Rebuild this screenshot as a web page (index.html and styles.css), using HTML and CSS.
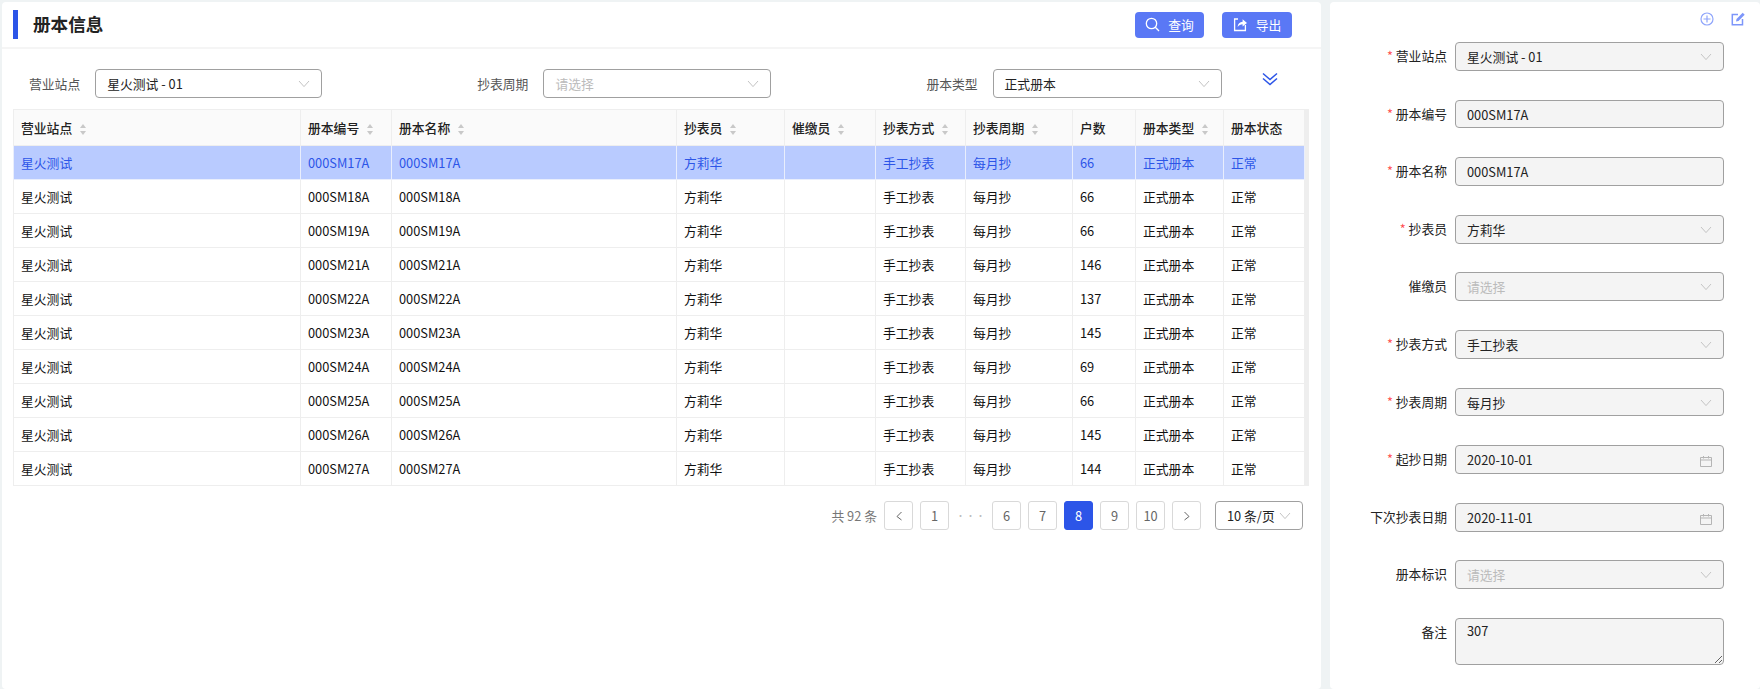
FILE: index.html
```html
<!DOCTYPE html>
<html lang="zh-CN">
<head>
    <meta charset="UTF-8">
    <meta name="viewport" content="width=device-width, initial-scale=1.0">
    <title>册本信息</title>
    <link rel="stylesheet" href="styles.css">
</head>
<body>
    <svg class="icon-defs" width="0" height="0">
        <symbol id="arrow" viewBox="0 0 12 8"><path d="M1 1l5 5.6L11 1" fill="none" stroke="currentColor" stroke-width="1"/></symbol>
        <symbol id="calendar" viewBox="0 0 12 12"><path d="M.5 2.5h11v9H.5zM.5 5h11M3.5 1v2.5M8.5 1v2.5" fill="none" stroke="currentColor" stroke-width="1"/></symbol>
    </svg>
    <div class="page">
        <div class="main-panel">
            <div class="panel-head">
                <h2 class="panel-title">册本信息</h2>
                <div class="head-actions">
                    <button class="head-btn">
                        <svg width="15" height="15" viewBox="0 0 15 15"><circle cx="6.5" cy="6.5" r="5.2" fill="none" stroke="#fff" stroke-width="1.3"/><path d="M10.3 10.3l3.7 3.7" stroke="#fff" stroke-width="1.3"/></svg>
                        查询
                    </button>
                    <button class="head-btn">
                        <svg width="15" height="15" viewBox="0 0 15 15"><path d="M5 2H1.6v11.5h10.8V8" fill="none" stroke="#fff" stroke-width="1.3"/><path d="M4.6 10c.2-3.4 2.200-5 5-5.200V2.200L14 6l-4.400 3.600V7.200c-2 0-3.600.8-5 2.800z" fill="#fff"/></svg>
                        导出
                    </button>
                </div>
            </div>
            <div class="filter-row">
                <div class="filter-item">
                    <label class="filter-label">营业站点</label>
                    <div class="control filter-1">星火测试 - 01<svg class="suffix"><use href="#arrow"/></svg></div>
                </div>
                <div class="filter-item">
                    <label class="filter-label">抄表周期</label>
                    <div class="control filter-2 placeholder">请选择<svg class="suffix"><use href="#arrow"/></svg></div>
                </div>
                <div class="filter-item">
                    <label class="filter-label">册本类型</label>
                    <div class="control filter-3">正式册本<svg class="suffix"><use href="#arrow"/></svg></div>
                </div>
                <svg class="expand" width="16" height="14" viewBox="0 0 16 14"><path d="M1 1.500l7 6 7-6M1 6.500l7 6 7-6" fill="none" stroke="#2c55e8" stroke-width="1.500"/></svg>
            </div>
            <div class="table-wrap">
                <table class="book-table">
                    <colgroup>
                        <col class="col-site"><col class="col-no"><col class="col-name"><col class="col-reader"><col class="col-payer"><col class="col-way"><col class="col-cycle"><col class="col-count"><col class="col-type"><col class="col-state">
                    </colgroup>
                    <thead>
                        <tr>
                            <th>营业站点<span class="sort"></span></th>
                            <th>册本编号<span class="sort"></span></th>
                            <th>册本名称<span class="sort"></span></th>
                            <th>抄表员<span class="sort"></span></th>
                            <th>催缴员<span class="sort"></span></th>
                            <th>抄表方式<span class="sort"></span></th>
                            <th>抄表周期<span class="sort"></span></th>
                            <th>户数</th>
                            <th>册本类型<span class="sort"></span></th>
                            <th>册本状态</th>
                        </tr>
                    </thead>
                    <tbody>
                        <tr class="selected"><td>星火测试</td><td>000SM17A</td><td>000SM17A</td><td>方莉华</td><td></td><td>手工抄表</td><td>每月抄</td><td>66</td><td>正式册本</td><td>正常</td></tr>
                        <tr><td>星火测试</td><td>000SM18A</td><td>000SM18A</td><td>方莉华</td><td></td><td>手工抄表</td><td>每月抄</td><td>66</td><td>正式册本</td><td>正常</td></tr>
                        <tr><td>星火测试</td><td>000SM19A</td><td>000SM19A</td><td>方莉华</td><td></td><td>手工抄表</td><td>每月抄</td><td>66</td><td>正式册本</td><td>正常</td></tr>
                        <tr><td>星火测试</td><td>000SM21A</td><td>000SM21A</td><td>方莉华</td><td></td><td>手工抄表</td><td>每月抄</td><td>146</td><td>正式册本</td><td>正常</td></tr>
                        <tr><td>星火测试</td><td>000SM22A</td><td>000SM22A</td><td>方莉华</td><td></td><td>手工抄表</td><td>每月抄</td><td>137</td><td>正式册本</td><td>正常</td></tr>
                        <tr><td>星火测试</td><td>000SM23A</td><td>000SM23A</td><td>方莉华</td><td></td><td>手工抄表</td><td>每月抄</td><td>145</td><td>正式册本</td><td>正常</td></tr>
                        <tr><td>星火测试</td><td>000SM24A</td><td>000SM24A</td><td>方莉华</td><td></td><td>手工抄表</td><td>每月抄</td><td>69</td><td>正式册本</td><td>正常</td></tr>
                        <tr><td>星火测试</td><td>000SM25A</td><td>000SM25A</td><td>方莉华</td><td></td><td>手工抄表</td><td>每月抄</td><td>66</td><td>正式册本</td><td>正常</td></tr>
                        <tr><td>星火测试</td><td>000SM26A</td><td>000SM26A</td><td>方莉华</td><td></td><td>手工抄表</td><td>每月抄</td><td>145</td><td>正式册本</td><td>正常</td></tr>
                        <tr><td>星火测试</td><td>000SM27A</td><td>000SM27A</td><td>方莉华</td><td></td><td>手工抄表</td><td>每月抄</td><td>144</td><td>正式册本</td><td>正常</td></tr>
                    </tbody>
                </table>
            </div>
            <div class="pager">
                <span class="pager-total">共 92 条</span>
                <a class="page-item">
                    <svg width="8" height="10" viewBox="0 0 8 10"><path d="M6.500 1L2 5.500 6.500 9" fill="none" stroke="#666" stroke-width="1"/></svg>
                </a>
                <a class="page-item">1</a>
                <span class="page-dots">•••</span>
                <a class="page-item">6</a>
                <a class="page-item">7</a>
                <a class="page-item active">8</a>
                <a class="page-item">9</a>
                <a class="page-item">10</a>
                <a class="page-item">
                    <svg width="8" height="10" viewBox="0 0 8 10"><path d="M1.500 1L6 5.500 1.500 9" fill="none" stroke="#666" stroke-width="1"/></svg>
                </a>
                <div class="control page-size">10 条/页<svg class="suffix"><use href="#arrow"/></svg></div>
            </div>
        </div>

        <div class="side-panel">
            <div class="side-tools">
                <svg width="14" height="14" viewBox="0 0 14 14"><circle cx="7" cy="7" r="6" fill="none" stroke="#8fa5fb" stroke-width="1.200"/><path d="M7 3.500v7M3.500 7h7" stroke="#8fa5fb" stroke-width="1.200"/></svg>
                <svg width="14" height="14" viewBox="0 0 14 14"><path d="M7 2.500H1.300v10.200h10.200V7" fill="none" stroke="#7d96fa" stroke-width="1.500"/><path d="M5 9.500l.5-2.500L11.700.8l2 2L7.500 9z" fill="#7d96fa"/></svg>
            </div>
            <div class="side-form">
                <div class="form-row"><label class="form-label required">营业站点</label><div class="control disabled">星火测试 - 01<svg class="suffix"><use href="#arrow"/></svg></div></div>
                <div class="form-row"><label class="form-label required">册本编号</label><div class="control disabled">000SM17A</div></div>
                <div class="form-row"><label class="form-label required">册本名称</label><div class="control disabled">000SM17A</div></div>
                <div class="form-row"><label class="form-label required">抄表员</label><div class="control disabled">方莉华<svg class="suffix"><use href="#arrow"/></svg></div></div>
                <div class="form-row"><label class="form-label">催缴员</label><div class="control disabled placeholder">请选择<svg class="suffix"><use href="#arrow"/></svg></div></div>
                <div class="form-row"><label class="form-label required">抄表方式</label><div class="control disabled">手工抄表<svg class="suffix"><use href="#arrow"/></svg></div></div>
                <div class="form-row"><label class="form-label required">抄表周期</label><div class="control disabled">每月抄<svg class="suffix"><use href="#arrow"/></svg></div></div>
                <div class="form-row"><label class="form-label required">起抄日期</label><div class="control disabled">2020-10-01<svg class="suffix date"><use href="#calendar"/></svg></div></div>
                <div class="form-row"><label class="form-label">下次抄表日期</label><div class="control disabled">2020-11-01<svg class="suffix date"><use href="#calendar"/></svg></div></div>
                <div class="form-row"><label class="form-label">册本标识</label><div class="control disabled placeholder">请选择<svg class="suffix"><use href="#arrow"/></svg></div></div>
                <div class="form-row"><label class="form-label">备注</label><textarea class="remark" disabled>307</textarea></div>
            </div>
        </div>
    </div>
</body>
</html>
```

FILE: styles.css
```css
* {
    box-sizing: border-box;
}
html, body {
    height: 100%;
}
body {
    margin: 0;
    background: #eff3f4;
    color: #222;
    font-family: "Noto Sans CJK SC", "Liberation Sans", sans-serif;
    font-size: 12.8px;
    overflow: hidden;
}
.icon-defs {
    position: absolute;
}
.page {
    display: flex;
    gap: 9px;
    height: 100%;
    padding: 2px 0 0 2px;
}

/* left panel */
.main-panel {
    width: 1319px;
    background: #fff;
    border-radius: 4px;
}
.panel-head {
    display: flex;
    justify-content: space-between;
    align-items: center;
    height: 47px;
    padding: 0 29px 0 11px;
    border-bottom: 2px solid #f5f5f5;
}
.panel-title {
    margin: 0;
    height: 29px;
    line-height: 27px;
    padding-left: 15px;
    border-left: 5px solid #2c55e8;
    font-size: 17.6px;
    font-weight: 700;
    color: #222;
}
.head-actions {
    display: flex;
    gap: 18px;
}
.head-btn {
    display: flex;
    align-items: center;
    justify-content: center;
    gap: 8px;
    width: 69px;
    height: 26px;
    padding: 0;
    background: #5a78f5;
    border: none;
    border-radius: 4px;
    color: #fff;
    font-family: inherit;
    font-size: 12.8px;
}
.head-btn + .head-btn {
    width: 70px;
}
.filter-row {
    display: flex;
    align-items: center;
    height: 29px;
    margin-top: 20px;
    padding-left: 27px;
}
.filter-item {
    display: flex;
    align-items: center;
    gap: 15px;
    color: #555;
}
.filter-item + .filter-item {
    margin-left: 155px;
}
.filter-1 {
    width: 227px;
}
.filter-2 {
    width: 228px;
}
.filter-3 {
    width: 229px;
}
.expand {
    margin: -10px 0 0 40px;
}

/* shared select / input box */
.control {
    position: relative;
    height: 28.8px;
    line-height: 27px;
    padding: 0 30px 0 11px;
    background: #fff;
    border: 1px solid #a0a0a0;
    border-radius: 4px;
    color: #222;
    white-space: nowrap;
}
.control.disabled {
    flex: 1;
    background: #f4f4f4;
}
.control.placeholder {
    color: #bbb;
}
.suffix {
    position: absolute;
    top: 10px;
    right: 11px;
    width: 12px;
    height: 8px;
    color: #c4c4c4;
}
.suffix.date {
    top: 9px;
    width: 12px;
    height: 12px;
    color: #b5b5b5;
}

/* table */
.table-wrap {
    width: 1296px;
    margin: 11px 0 0 11px;
    border-right: 5px solid #eee;
}
.book-table {
    width: 100%;
    border-collapse: collapse;
    table-layout: fixed;
}
.col-site { width: 287px; }
.col-no { width: 91px; }
.col-name { width: 285px; }
.col-reader { width: 108px; }
.col-payer { width: 91px; }
.col-way { width: 90px; }
.col-cycle { width: 107px; }
.col-count { width: 63px; }
.col-type { width: 88px; }
.col-state { width: 81px; }
.book-table th, .book-table td {
    height: 34px;
    padding: 0 7px;
    border: 1px solid #eee;
    text-align: left;
    white-space: nowrap;
}
.book-table th {
    height: 36px;
    background: #fafafa;
    font-weight: 500;
    color: #222;
}
.book-table td {
    color: #111;
}
.book-table tr.selected td {
    background: #b9cbff;
    border-color: #e9eefc;
    color: #2c55e8;
}
.sort {
    display: inline-block;
    position: relative;
    width: 7px;
    height: 11px;
    margin-left: 8px;
    vertical-align: -2px;
}
.sort::before, .sort::after {
    content: "";
    position: absolute;
    left: 0;
    border-left: 3.5px solid transparent;
    border-right: 3.5px solid transparent;
}
.sort::before {
    top: 0;
    border-bottom: 4.5px solid #c8c8c8;
}
.sort::after {
    bottom: 0;
    border-top: 4.5px solid #c8c8c8;
}

/* pagination */
.pager {
    display: flex;
    align-items: center;
    gap: 7px;
    width: 1301px;
    margin-top: 15px;
    justify-content: flex-end;
}
.pager-total {
    color: #777;
}
.page-item {
    display: flex;
    align-items: center;
    justify-content: center;
    width: 29px;
    height: 29px;
    border: 1px solid #d9d9d9;
    border-radius: 3px;
    color: #666;
}
.page-item.active {
    background: #2c55e8;
    border-color: #2c55e8;
    color: #fff;
}
.page-dots {
    width: 29px;
    color: #bbb;
    font-size: 9px;
    letter-spacing: 1px;
    text-align: center;
}
.page-size {
    width: 88px;
    margin-left: 7px;
    padding-left: 11px;
}

/* right panel */
.side-panel {
    flex: 1;
    background: #fff;
    border-radius: 4px;
}
.side-tools {
    display: flex;
    justify-content: flex-end;
    gap: 17px;
    height: 40px;
    padding: 10px 15px 0 0;
}
.side-form {
    display: flex;
    flex-direction: column;
    gap: 28.8px;
    padding-right: 36px;
}
.form-row {
    display: flex;
    align-items: flex-start;
    min-height: 28.8px;
}
.form-label {
    width: 117px;
    margin-right: 8px;
    line-height: 27px;
    text-align: right;
    color: #222;
}
.form-label.required::before {
    content: "* ";
    color: #ff4d4f;
}
.remark {
    flex: 1;
    height: 46.8px;
    padding: 0 11px;
    background: #f4f4f4;
    border: 1px solid #a0a0a0;
    border-radius: 4px;
    color: #222;
    font-family: inherit;
    font-size: 12.8px;
    line-height: 24px;
}
```
